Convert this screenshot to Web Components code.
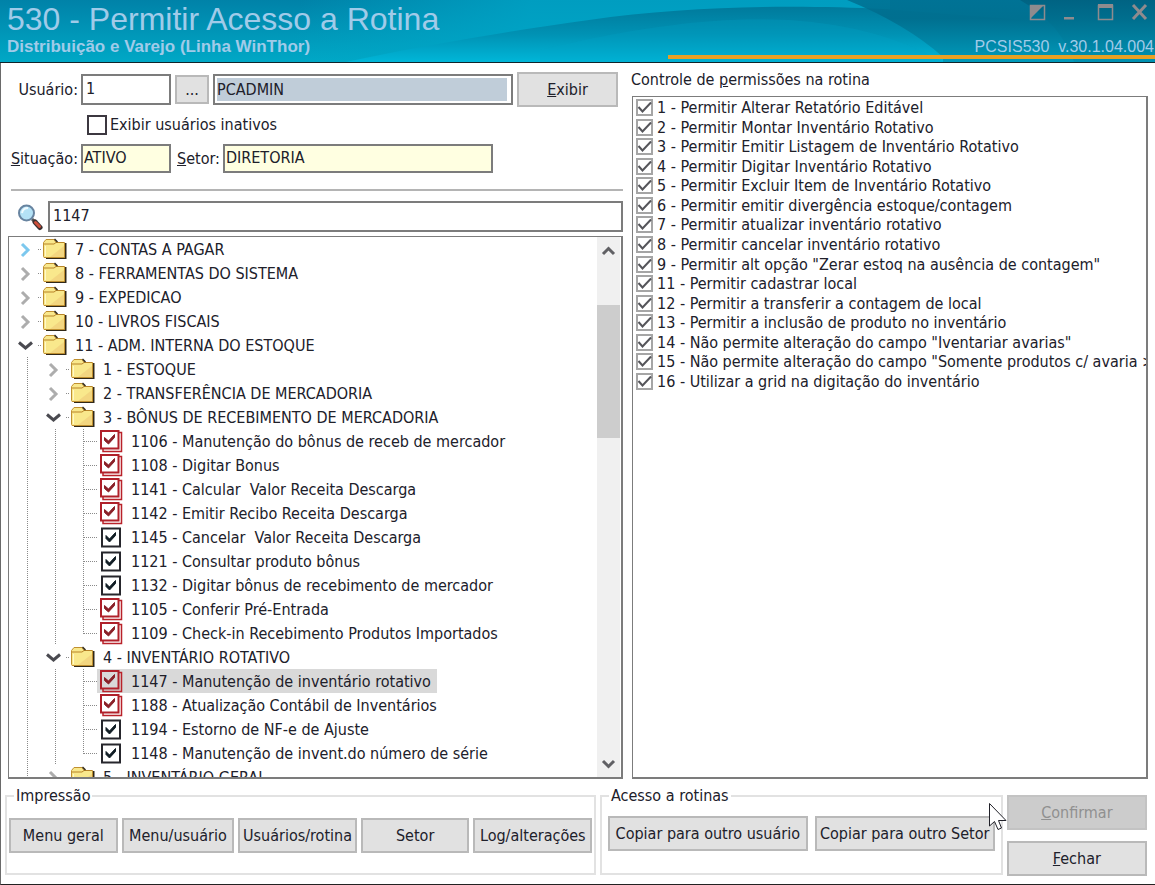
<!DOCTYPE html>
<html lang="pt-BR">
<head>
<meta charset="utf-8">
<title>530 - Permitir Acesso a Rotina</title>
<style>
  html, body { margin: 0; height: 100%; }
  body {
    --edge: #7c7c7c; --ink: #20202a; --face: #e1e1e1;
    font: 16px/20px "DejaVu Sans Condensed", "Noto Sans", sans-serif;
    color: var(--ink); background: #fff; overflow: hidden;
  }
</style>
</head>
<body>
<routine-window></routine-window>

<script>
const define = (name, markup, setup) => {
  const template = document.createElement('template');
  template.innerHTML = markup;
  customElements.define(name, class extends HTMLElement {
    constructor() {
      super();
      this.attachShadow({ mode: 'open' }).append(template.content.cloneNode(true));
    }
    connectedCallback() { if (setup) setup(this, this.shadowRoot); }
  });
};

define('title-bar', `
<style>
  :host { display: flex; justify-content: space-between; position: relative; height: 62px; flex: none;
    border-bottom: 1px solid #10242a; color: #a0cbe9; font-family: "Liberation Sans", Arial, sans-serif; overflow: hidden; }
  .art { position: absolute; inset: 0; width: 100%; height: 100%; }
  .names, .side { position: relative; display: flex; flex-direction: column; }
  .names { padding: 1px 0 0 7px; }
  h1 { margin: 0; font-size: 32px; line-height: 36px; font-weight: 400; }
  h2 { margin: 0; font-size: 17px; line-height: 20px; font-weight: 700; }
  .side { align-items: flex-end; justify-content: space-between; padding: 3px 1px 5px 0; }
  .controls { display: flex; gap: 17px; padding-right: 6px; }
  .controls button { all: unset; width: 17px; height: 18px; }
  .controls svg { display: block; width: 17px; height: 18px; }
  .version { font-size: 16px; line-height: 20px; white-space: pre; }
  .accent { position: absolute; right: 0; bottom: 3px; width: 42.2%; height: 4px; background: #e8a024; }
</style>
<svg class="art" viewBox="0 0 1155 62" preserveAspectRatio="none" aria-hidden="true">
  <defs>
    <linearGradient id="base" x1="0" y1="0" x2="0" y2="1"><stop offset="0" stop-color="#0082a8"/><stop offset="1" stop-color="#00a8c6"/></linearGradient>
    <linearGradient id="glow" gradientUnits="userSpaceOnUse" x1="300" y1="0" x2="520" y2="50"><stop offset="0" stop-color="#00a8c8" stop-opacity="0"/><stop offset="1" stop-color="#00a6c8" stop-opacity=".75"/></linearGradient>
    <linearGradient id="wave" x1="0" y1="0" x2="0" y2="1"><stop offset="0" stop-color="#007a9c"/><stop offset=".5" stop-color="#0092b4"/><stop offset="1" stop-color="#00b6d8"/></linearGradient>
    <linearGradient id="deep" x1="0" y1="0" x2="0" y2="1"><stop offset="0" stop-color="#007092"/><stop offset=".3" stop-color="#006c8c"/><stop offset="1" stop-color="#0096b6"/></linearGradient>
    <linearGradient id="end" x1="0" y1="0" x2="0" y2="1"><stop offset="0" stop-color="#005f7e"/><stop offset="1" stop-color="#0090b0"/></linearGradient>
  </defs>
  <path fill="url(#base)" d="M0 0H1155V62H0Z"/>
  <path fill="url(#glow)" d="M220 0H890V10L346 62H220Z"/>
  <path fill="url(#wave)" d="M346 62C420 46 510 31 589 20C690 5 800 5 884 9L1155 30V62Z"/>
  <path fill="#00a5c6" opacity=".25" d="M540 50C640 26 720 16 790 20Q880 26 943 62H540Z"/>
  <path fill="url(#deep)" d="M847 0Q906 24 943 57V62H1155V0Z" opacity=".85"/>
  <path fill="url(#end)" d="M1020 0Q1061 24 1074 62H1155V0Z" opacity=".8"/>
</svg>
<div class="names"><h1>530 - Permitir Acesso a Rotina</h1><h2>Distribuição e Varejo (Linha WinThor)</h2></div>
<div class="side">
  <div class="controls">
    <button aria-label="Alternar"><svg viewBox="0 0 17 18"><path d="M1.500 2.500H15.500V16.500H1.500Z" fill="none" stroke="#8f8b8e" stroke-width="1.500"/><path d="M1 2H15L1 16Z" fill="#8f8b8e"/></svg></button>
    <button aria-label="Minimizar"><svg viewBox="0 0 17 18"><path d="M1 14H11V16.500H1Z" fill="#8f8b8e"/></svg></button>
    <button aria-label="Maximizar"><svg viewBox="0 0 17 18"><path d="M1.500 2.500H15.500V16.500H1.500Z" fill="none" stroke="#8f8b8e" stroke-width="1.500"/><path d="M1 1H16V5H1Z" fill="#8f8b8e"/></svg></button>
    <button aria-label="Fechar janela"><svg viewBox="0 0 17 18"><path d="M2 2L15 16M15 2L2 16" stroke="#8f8b8e" stroke-width="3"/></svg></button>
  </div>
  <div class="version">PCSIS530  v.30.1.04.004</div>
</div>
<div class="accent"></div>`);

define('push-button', `
<style>
  :host { display: block; min-width: 0; height: 35px; }
  button { box-sizing: border-box; width: 100%; height: 100%; padding: 0; font: inherit; color: inherit; white-space: nowrap;
    display: flex; align-items: center; justify-content: center;
    background: var(--face); border: 2px solid #b9b9b9; border-radius: 0; }
  button:disabled { color: #909090; background: #ccc; border-color: #c3c3c3; }
</style>
<button><span><slot></slot></span></button>`,
(host, root) => { root.querySelector('button').disabled = host.hasAttribute('disabled'); });

define('text-field', `
<style>
  :host { display: flex; align-items: center; gap: 3px; min-width: 0; }
  :host([lead]) label { width: 67px; display: flex; justify-content: flex-end; }
  label { flex: none; white-space: nowrap; }
  label.none { display: none; }
  input { box-sizing: border-box; flex: 1; width: 100%; min-width: 0; height: 31px; font: inherit; color: inherit;
    background-color: #fff; border: 2px solid var(--edge); border-radius: 0; padding: 0 3px 2px 3px; outline: 0; }
  :host([tone=note]) input { height: 29px; background-color: #ffffe1; padding-left: 1px; }
  :host([tone=picked]) input { padding: 2px 4px 2px 2px; background: #c0cdd9 content-box; box-shadow: none; }
</style>
<label for="f"><span><slot></slot></span></label><input id="f">`,
(host, root) => {
  const input = root.querySelector('input');
  input.value = host.getAttribute('value');
  if (host.hasAttribute('name')) {
    input.setAttribute('aria-label', host.getAttribute('name'));
    root.querySelector('label').className = 'none';
  }
});

define('inactive-toggle', `
<style>
  :host { display: flex; height: 21px; padding-left: 76px; }
  label { display: flex; align-items: center; gap: 3px; }
  input { appearance: none; box-sizing: border-box; width: 20px; height: 20px; margin: 0; border: 2px solid #3c3840; background: #fff; }
</style>
<label><input type="checkbox"><slot></slot></label>`);

define('permission-item', `
<style>
  :host { display: flex; align-items: center; min-width: 0; min-height: 0; line-height: 19px; }
  label { display: flex; align-items: center; white-space: nowrap; }
  .box { display: grid; flex: none; width: 17px; height: 17px; margin-right: 4px; }
  .box > * { grid-area: 1 / 1; width: 17px; height: 17px; margin: 0; box-sizing: border-box; }
  input { appearance: none; border: 2px solid #a5a5a5; background: #fff; }
  svg { pointer-events: none; }
</style>
<label><span class="box"><input type="checkbox" checked><svg viewBox="0 0 17 17"><path d="M2.500 8L6.500 12.500L15 3.500" fill="none" stroke="#55555a" stroke-width="2"/></svg></span><slot></slot></label>`);

/* One row of the routine tree: guide lines, expander, icon and caption. */
define('tree-row', `
<style>
  :host { display: flex; flex: none; height: 24px; padding-left: 4px; white-space: pre; }
  .cell { flex: none; width: 28px; height: 24px; display: block; }
  .cell button { all: unset; display: block; width: 28px; height: 24px; }
  .cell svg { display: block; width: 28px; height: 24px; }
  .guide { fill: none; stroke: #8a8a8a; stroke-width: 1; stroke-dasharray: 1 1; }
  .item { display: flex; align-items: center; height: 24px; padding: 0 6px 0 2px; }
  :host([selected]) .item { background: #d9d9d9; }
  .caption { padding-top: 2px; }
  .icon { display: grid; flex: none; width: 24px; height: 24px; margin-right: 8px; }
  .icon > * { grid-area: 1 / 1; width: 24px; height: 24px; margin: 0; }
  .icon input { appearance: none; }
  .icon svg { pointer-events: none; }
</style>
<span class="item"><span class="icon"></span><span class="caption"><slot></slot></span></span>`,
(host, root) => {
  const item = root.querySelector('.item');
  const level = Number(host.getAttribute('level') || 0);
  const kind = host.getAttribute('kind');
  const cell = (inner, control) => {
    const el = document.createElement('span');
    el.className = 'cell';
    const svg = '<svg viewBox="0 0 28 24" aria-hidden="true">' + inner + '</svg>';
    el.innerHTML = control ? '<button aria-label="' + control + '">' + svg + '</button>' : svg;
    item.before(el);
  };
  const rail = '<path class="guide" d="M14.500 0V24"/>';
  if (kind) {
    for (let i = 0; i < 2; i++) cell(rail);
    const bottom = host.hasAttribute('last') ? 13 : 24;
    cell('<path class="guide" d="M14.500 0V' + bottom + 'M15 12.500H28"/>');
  } else {
    for (let i = 0; i < level; i++) cell(rail);
    const open = host.hasAttribute('open');
    const tint = host.hasAttribute('hot') ? '#7cc8ee' : '#adadad';
    cell((open ? '<path d="M6 9.500L12.500 15L19 9.500" fill="none" stroke="#4a4a50" stroke-width="3"/>'
               : '<path d="M9 7L15 13L9 19" fill="none" stroke="' + tint + '" stroke-width="3"/>')
      + '<path class="guide" d="M25 12.500H28"/>', open ? 'Recolher' : 'Expandir');
  }
  const icon = root.querySelector('.icon');
  if (kind === 'red') {
    icon.innerHTML = '<input type="checkbox" checked aria-label="' + host.textContent + '"><svg viewBox="0 0 24 24"><path d="M20 3.500H22.500V22.500H4V20" fill="none" stroke="#b9222a" stroke-width="1.500"/><path d="M2 2H19.500V19.500H2Z" fill="' + (host.hasAttribute('selected') ? '#d9d9d9' : '#fff') + '" stroke="#b0202a" stroke-width="2"/><path d="M5.500 8.500L9.500 12L15.500 5.500V8.500L9.500 15L5.500 11.500Z" fill="#8a2028" stroke="#8a2028"/></svg>';
  } else if (kind) {
    icon.innerHTML = '<input type="checkbox" checked aria-label="' + host.textContent + '"><svg viewBox="0 0 24 24"><path d="M3 3.500H21V21.500H3Z" fill="#fff" stroke="#26262c" stroke-width="2"/><path d="M7 10.500L10.500 14L16.500 7.500V10.500L10.500 17L7 13.500Z" fill="#101c24" stroke="#101c24"/></svg>';
  } else {
    icon.innerHTML = '<svg viewBox="0 0 24 24" aria-hidden="true"><path d="M3 6H23.500V22H3Z" fill="#302818"/><path d="M.500 19.500V5.500L3 2.500H11L13 5.500H21.500V20.500H1Z" fill="#f9e88c" stroke="#c09030"/><path d="M1 7H11L13 5.500H21" fill="none" stroke="#b88428"/><path d="M11.500 2L14.500 5" stroke="#302818" stroke-width="1.500"/><path d="M21 9V20H7Z" fill="#eeca78" opacity=".6"/><path d="M2.500 19V9" stroke="#fff8c8"/></svg>';
  }
});

define('side-scroller', `
<style>
  :host { display: flex; flex-direction: column; flex: none; width: 23px; margin-right: 1px; background: #f0f0f0; }
  button { all: unset; flex: none; height: 28px; width: 23px; }
  svg { display: block; width: 23px; height: 28px; }
  .track { flex: 1; display: grid; grid-template-rows: 8.300fr 27.500fr 64.200fr; min-height: 0; }
  .thumb { grid-row: 2; background: #cdcdcd; }
</style>
<button aria-label="Rolar para cima"><svg viewBox="0 0 23 28"><path d="M6 17L11.500 11.500L17 17" fill="none" stroke="#606064" stroke-width="3"/></svg></button>
<div class="track"><div class="thumb"></div></div>
<button aria-label="Rolar para baixo"><svg viewBox="0 0 23 28"><path d="M6 12L11.500 17.500L17 12" fill="none" stroke="#606064" stroke-width="3"/></svg></button>`);

define('button-group', `
<style>
  :host { display: block; min-width: 0; }
  fieldset { box-sizing: border-box; height: 89px; min-width: 0; margin: 0; border: 2px solid #e2e2e2; padding: 0 var(--side, 2px); }
  legend { padding: 0 2px; margin-left: calc(7px - var(--side, 2px)); line-height: 20px; }
  .row { display: flex; gap: var(--gap, 4px); padding-top: var(--drop, 12px); }
</style>
<fieldset><legend></legend><div class="row"><slot></slot></div></fieldset>`,
(host, root) => { root.querySelector('legend').textContent = host.getAttribute('caption'); });

define('user-form', `
<style>
  :host { display: flex; flex-direction: column; border-bottom: 2px solid #b4b4b4; margin-left: 3px; padding-bottom: 16px; }
  .row { display: flex; align-items: center; }
  .who { gap: 4px; height: 35px; margin-right: 5px; }
  .code { flex: 0 0 160px; }
  .who push-button.more { flex: 0 0 34px; height: 29px; }
  .who text-field.name { flex: 1; }
  .who push-button.show { flex: 0 0 101px; }
  inactive-toggle { margin: 7px 0 9px; }
  .place { gap: 6px; }
  .place .sector { flex: 0 1 316px; }
</style>
<div class="row who">
  <text-field class="code" lead value="1">Usuário:</text-field>
  <push-button class="more">...</push-button>
  <text-field class="name" tone="picked" name="Nome do usuário" value="PCADMIN"></text-field>
  <push-button class="show"><u>E</u>xibir</push-button>
</div>
<inactive-toggle>Exibir usuários inativos</inactive-toggle>
<div class="row place">
  <text-field class="code" lead tone="note" value="ATIVO"><u>S</u>ituação:</text-field>
  <text-field class="sector" tone="note" value="DIRETORIA"><u>S</u>etor:</text-field>
</div>`);

define('routine-search', `
<style>
  :host { display: flex; align-items: center; gap: 5px; padding-left: 9px; }
  svg { flex: none; width: 26px; height: 28px; }
  text-field { flex: 1; }
</style>
<svg viewBox="0 0 26 28" aria-hidden="true"><path d="M15 16L18 19" stroke="#555" stroke-width="3"/><path d="M18 19L23 24.500" stroke="#3c3030" stroke-width="5" stroke-linecap="round"/><path d="M18.500 19.500L22.500 23.500" stroke="#d0503a" stroke-width="3" stroke-linecap="round"/><circle cx="9.500" cy="10" r="7.500" fill="#b4e2f6" stroke="#6884a0" stroke-width="2"/><path d="M5 10Q6 5 11 5" stroke="#f0fbff" stroke-width="2" fill="none"/></svg>
<text-field name="Pesquisar rotina" value="1147"></text-field>`);

define('routine-tree', `
<style>
  :host { display: flex; box-sizing: border-box; flex: 1; min-height: 0; border: 2px solid var(--edge); border-width: 1px 2px 2px 1px; background: #fff; }
  .rows { flex: 1; min-width: 0; overflow: hidden; display: flex; flex-direction: column; }
</style>
<div class="rows">
  <tree-row hot>7 - CONTAS A PAGAR</tree-row>
  <tree-row>8 - FERRAMENTAS DO SISTEMA</tree-row>
  <tree-row>9 - EXPEDICAO</tree-row>
  <tree-row>10 - LIVROS FISCAIS</tree-row>
  <tree-row open>11 - ADM. INTERNA DO ESTOQUE</tree-row>
  <tree-row level="1">1 - ESTOQUE</tree-row>
  <tree-row level="1">2 - TRANSFERÊNCIA DE MERCADORIA</tree-row>
  <tree-row level="1" open>3 - BÔNUS DE RECEBIMENTO DE MERCADORIA</tree-row>
  <tree-row kind="red">1106 - Manutenção do bônus de receb de mercador</tree-row>
  <tree-row kind="red">1108 - Digitar Bonus</tree-row>
  <tree-row kind="red">1141 - Calcular  Valor Receita Descarga</tree-row>
  <tree-row kind="red">1142 - Emitir Recibo Receita Descarga</tree-row>
  <tree-row kind="black">1145 - Cancelar  Valor Receita Descarga</tree-row>
  <tree-row kind="black">1121 - Consultar produto bônus</tree-row>
  <tree-row kind="black">1132 - Digitar bônus de recebimento de mercador</tree-row>
  <tree-row kind="red">1105 - Conferir Pré-Entrada</tree-row>
  <tree-row kind="red" last>1109 - Check-in Recebimento Produtos Importados</tree-row>
  <tree-row level="1" open>4 - INVENTÁRIO ROTATIVO</tree-row>
  <tree-row kind="red" selected>1147 - Manutenção de inventário rotativo</tree-row>
  <tree-row kind="red">1188 - Atualização Contábil de Inventários</tree-row>
  <tree-row kind="black">1194 - Estorno de NF-e de Ajuste</tree-row>
  <tree-row kind="black" last>1148 - Manutenção de invent.do número de série</tree-row>
  <tree-row level="1">5 - INVENTÁRIO GERAL</tree-row>
</div>
<side-scroller></side-scroller>`);

define('permission-list', `
<style>
  :host { display: flex; flex-direction: column; min-width: 0; min-height: 0; }
  h3 { margin: 0 0 6px -1px; font: inherit; }
  .box { flex: 1; min-height: 0; border: 2px solid var(--edge); border-width: 1px 2px 2px 1px; overflow: hidden; padding: 1px 0 0 3px; }
  .rows { display: grid; grid-auto-rows: minmax(0, 1fr); height: 293px; }
</style>
<h3>Controle de <u>p</u>ermissões na rotina</h3>
<div class="box"><div class="rows">
  <permission-item>1 - Permitir Alterar Retatório Editável</permission-item>
  <permission-item>2 - Permitir Montar Inventário Rotativo</permission-item>
  <permission-item>3 - Permitir Emitir Listagem de Inventário Rotativo</permission-item>
  <permission-item>4 - Permitir Digitar Inventário Rotativo</permission-item>
  <permission-item>5 - Permitir Excluir Item de Inventário Rotativo</permission-item>
  <permission-item>6 - Permitir emitir divergência estoque/contagem</permission-item>
  <permission-item>7 - Permitir atualizar inventário rotativo</permission-item>
  <permission-item>8 - Permitir cancelar inventário rotativo</permission-item>
  <permission-item>9 - Permitir alt opção "Zerar estoq na ausência de contagem"</permission-item>
  <permission-item>11 - Permitir cadastrar local</permission-item>
  <permission-item>12 - Permitir a transferir a contagem de local</permission-item>
  <permission-item>13 - Permitir a inclusão de produto no inventário</permission-item>
  <permission-item>14 - Não permite alteração do campo "Iventariar avarias"</permission-item>
  <permission-item>15 - Não permite alteração do campo "Somente produtos c/ avaria &gt;</permission-item>
  <permission-item>16 - Utilizar a grid na digitação do inventário</permission-item>
</div></div>`);

define('routine-window', `
<style>
  :host { display: flex; flex-direction: column; height: 100vh; position: relative; }
  main { flex: 1; min-height: 0; display: flex; flex-direction: column; border: solid #6a6a6a; border-width: 0 0 0 1px; border-bottom: 1px solid #222; }
  .panels { flex: 1; min-height: 0; display: grid; grid-template-columns: minmax(0, 615fr) minmax(0, 516fr); gap: 9px; padding: 9px 7px 0; }
  .left { display: flex; flex-direction: column; min-height: 0; }
  routine-search { margin: 10px 0 4px; }
  permission-list { margin-top: -2px; }
  footer { display: grid; grid-template-columns: minmax(0, 590fr) minmax(0, 402fr) minmax(0, 140fr); gap: 4px; padding: 7px 8px 8px 4px; }
  push-button { flex: 112 1 0; }
  .slim { flex-grow: 108; }
  .wide { flex-grow: 118; }
  .access { --gap: 7px; --drop: 10px; --side: 6px; }
  .user { flex-grow: 124; }
  .actions { display: grid; gap: 11px; align-content: start; padding-top: 9px; }
  .pointer { position: absolute; left: 988px; top: 802px; width: 20px; height: 30px; }
</style>
<title-bar></title-bar>
<main>
  <div class="panels">
    <div class="left">
      <user-form></user-form>
      <routine-search></routine-search>
      <routine-tree></routine-tree>
    </div>
    <permission-list></permission-list>
  </div>
  <footer>
    <button-group caption="Impressão">
      <push-button class="slim">Menu <u>g</u>eral</push-button>
      <push-button>Menu/usuário</push-button>
      <push-button class="wide">Usuários/rotina</push-button>
      <push-button class="slim">Setor</push-button>
      <push-button class="wide">Log/alterações</push-button>
    </button-group>
    <button-group class="access" caption="Acesso a rotinas">
      <push-button class="user">Copiar para outro usuário</push-button>
      <push-button>Copiar para outro Setor</push-button>
    </button-group>
    <div class="actions">
      <push-button disabled><u>C</u>onfirmar</push-button>
      <push-button><u>F</u>echar</push-button>
    </div>
  </footer>
</main>
<svg class="pointer" viewBox="0 0 20 30" aria-hidden="true"><path d="M1.500 1.500V24L6.500 19.500L10 27.500L13.500 26L10.500 18.500H18Z" fill="#fff" stroke="#202028"/></svg>`);
</script>
</body>
</html>
